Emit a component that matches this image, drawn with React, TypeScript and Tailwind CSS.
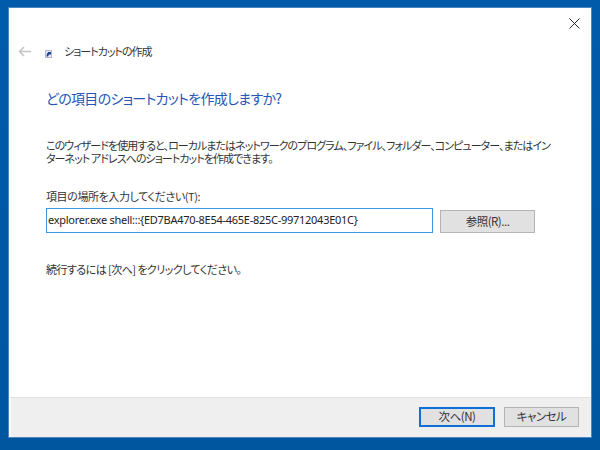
const font = "font-['Noto_Sans_CJK_JP','Noto_Sans',sans-serif] [font-feature-settings:'palt']";

function BackArrow() {
  return (
    <svg width="13" height="11" viewBox="0 0 13 11" fill="none" stroke="#c4c4c4" strokeWidth="1.5">
      <path d="M13 5.5H1.5M6 1 1.5 5.5 6 10" />
    </svg>
  );
}

function ShortcutIcon() {
  return (
    <svg width="7" height="8" viewBox="0 0 7 8">
      <rect x="0.5" y="0.5" width="6" height="7" fill="#e6e8f2" stroke="#b4b8cc" />
      <path d="M1.5 6.5 2 3.5 3.5 2H6v2.5H4L3 6.5z" fill="#1c3f94" />
    </svg>
  );
}

function CloseIcon() {
  return (
    <svg width="11" height="11" viewBox="0 0 11 11" stroke="#222" strokeWidth="1" fill="none">
      <path d="M0.5 0.5 10.5 10.5M10.5 0.5 0.5 10.5" />
    </svg>
  );
}

function WinButton({ label, className }: { label: string; className: string }) {
  return (
    <button className={`flex items-center justify-center bg-[#e1e1e1] text-[11.5px] tracking-[-0.5px] text-[#333] ${className}`}>
      {label}
    </button>
  );
}

export default function App() {
  return (
    <div className={`${font} w-[600px] h-[450px] overflow-hidden bg-gradient-to-b from-[#005bab] to-[#00569f] pt-2 pl-[9px]`}>
      <div className="flex h-[429px] w-[582px] flex-col bg-white shadow-[0_0_0_1px_#4f86bf]">
        <div className="flex justify-end pt-[10px] pr-[11px]">
          <CloseIcon />
        </div>
        <div className="flex items-center pt-[14px] pl-[9px]">
          <BackArrow />
          <div className="ml-[14px] mt-[6px]">
            <ShortcutIcon />
          </div>
          <span className="ml-[12px] whitespace-nowrap text-[11px] leading-4 tracking-[-1px] text-[#333]">ショートカットの作成</span>
        </div>
        <h1 className="mt-[29px] ml-[37px] whitespace-nowrap text-[14px] leading-5 tracking-[-0.7px] text-[#2456b8]">
          どの項目のショートカットを作成しますか?
        </h1>
        <p className="mt-[31px] ml-[37px] whitespace-nowrap text-[11px] leading-[13px] tracking-[-0.95px] text-[#333]">
          このウィザードを使用すると、ローカルまたはネットワークのプログラム、ファイル、フォルダー、コンピューター、またはイン
          <br />
          ターネット アドレスへのショートカットを作成できます。
        </p>
        <label className="mt-[24px] ml-[37px] whitespace-nowrap text-[11px] leading-[14px] tracking-[-0.4px] text-[#333]">
          項目の場所を入力してください(T):
        </label>
        <div className="mt-[5px] ml-[37px] flex items-start">
          <div className="flex h-[25px] w-[387px] items-center border border-[#3f96df] pl-[1px] font-['Noto_Sans',sans-serif] text-[11px] tracking-[-0.27px] text-[#222]">
            {"explorer.exe shell:::{ED7BA470-8E54-465E-825C-99712043E01C}"}
          </div>
          <WinButton label="参照(R)..." className="mt-[2px] ml-[7px] h-[23px] w-[95px] border border-[#b4b4b4]" />
        </div>
        <p className="mt-[29px] ml-[37px] whitespace-nowrap text-[11px] leading-[14px] tracking-[-0.55px] text-[#333]">
          続行するには [次へ] をクリックしてください。
        </p>
        <div className="mt-auto flex h-[40px] items-start justify-end gap-[9px] border-t border-[#e2e2e2] border-l-2 border-l-white bg-[#efefef] pt-[9px] pr-[12px]">
          <WinButton label="次へ(N)" className="h-[20px] w-[76px] border-2 border-[#0f6fd6]" />
          <WinButton label="キャンセル" className="h-[20px] w-[75px] border border-[#b4b4b4]" />
        </div>
      </div>
    </div>
  );
}
